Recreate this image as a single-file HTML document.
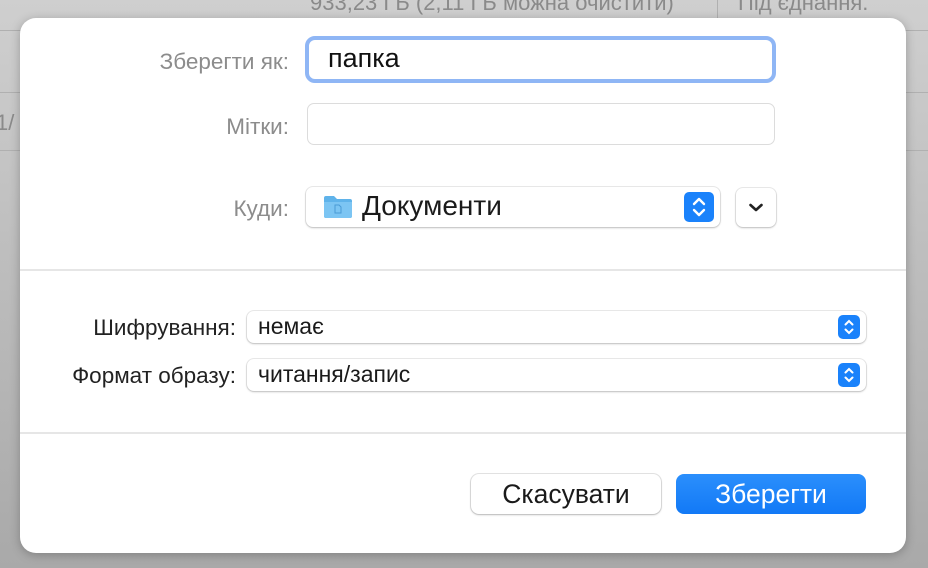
<!DOCTYPE html>
<html><head><meta charset="utf-8"><style>
*{margin:0;padding:0;box-sizing:border-box}
body{width:928px;height:568px;overflow:hidden;background:linear-gradient(#cfcfcf,#b8b8b8 60%,#a9a9a9);font-family:"Liberation Sans","DejaVu Sans",sans-serif;position:relative}
.bgtext{position:absolute;color:#8a8a8a;font-size:22px}
.hl{position:absolute;left:0;width:928px;height:1px;background:#b0b0b0}
.dlg{position:absolute;left:20px;top:18px;width:886px;height:535px;background:#fff;border-radius:16px;box-shadow:0 2px 10px rgba(0,0,0,.25)}
.lbl{position:absolute;font-size:22.5px;text-align:right;color:#8c8c8c;white-space:nowrap}
.lbl.dark{color:#222}
.field{position:absolute;background:#fff;border:1px solid #dcdcdc;border-radius:7px}
.pop{position:absolute;background:#fff;border-radius:7px;box-shadow:0 0 0 1px rgba(0,0,0,.08),0 1px 2px rgba(0,0,0,.2);font-size:23px;color:#1a1a1a}
.step{position:absolute;background:#1a82fb;border-radius:5px}
.sep{position:absolute;left:0;width:886px;height:2px;background:#e6e6e6}
.btn{position:absolute;height:40px;border-radius:8px;font-size:26.5px;text-align:center;line-height:40px}
</style></head><body>
<div class="bgtext" style="left:310px;top:-10px">933,23 ГБ (2,11 ГБ можна очистити)</div>
<div class="bgtext" style="left:738px;top:-10px">Під єднання.</div>
<div style="position:absolute;left:717px;top:0;width:1px;height:18px;background:#b0b0b0"></div>
<div class="hl" style="top:30px"></div>
<div class="hl" style="top:92px"></div>
<div class="hl" style="top:150px"></div>
<div class="bgtext" style="left:-4px;top:110px">1/</div>
<div class="dlg">
  <div class="lbl" style="left:60px;top:31px;width:209px">Зберегти як:</div>
  <div style="position:absolute;left:285px;top:18px;width:471px;height:47px;border:4px solid #8fb6f5;border-radius:10px;background:#fff"></div>
  <div style="position:absolute;left:308px;top:25px;font-size:27px;color:#111">папка</div>
  <div class="lbl" style="left:60px;top:96px;width:209px">Мітки:</div>
  <div class="field" style="left:287px;top:85px;width:468px;height:42px"></div>
  <div class="lbl" style="left:60px;top:178px;width:209px">Куди:</div>
  <div class="pop" style="left:286px;top:169px;width:414px;height:40px">
    <svg style="position:absolute;left:17px;top:8px" width="30" height="24" viewBox="0 0 30 24"><path d="M1 3a2 2 0 0 1 2-2h8l3 3h13a2 2 0 0 1 2 2v15a2 2 0 0 1-2 2H3a2 2 0 0 1-2-2z" fill="#5fb3ea"/><path d="M1 7h28v14a2 2 0 0 1-2 2H3a2 2 0 0 1-2-2z" fill="#7cc5f3"/><path d="M12 10h4l2 2v6h-6z" fill="none" stroke="#4a9bd6" stroke-width="1"/></svg>
    <div style="position:absolute;left:56px;top:3px;font-size:28px">Документи</div>
    <div class="step" style="left:378px;top:5px;width:30px;height:30px"><svg width="30" height="30" viewBox="0 0 30 30"><path d="M10 12l5-5 5 5M10 18l5 5 5-5" fill="none" stroke="#fff" stroke-width="2.4" stroke-linecap="round" stroke-linejoin="round"/></svg></div>
  </div>
  <div class="pop" style="left:716px;top:170px;width:40px;height:39px"><svg width="40" height="39" viewBox="0 0 40 39"><path d="M14.5 17l5.5 5 5.5-5" fill="none" stroke="#222" stroke-width="2.6" stroke-linecap="round" stroke-linejoin="round"/></svg></div>
  <div class="sep" style="top:251px"></div>
  <div class="lbl dark" style="left:0;top:297px;width:216px">Шифрування:</div>
  <div class="pop" style="left:227px;top:293px;width:619px;height:32px"><div style="position:absolute;left:11px;top:2px">немає</div><div class="step" style="left:591px;top:4px;width:22px;height:24px"><svg width="22" height="24" viewBox="0 0 22 24"><path d="M7.5 9.5l3.5-3.5 3.5 3.5M7.5 14.5l3.5 3.5 3.5-3.5" fill="none" stroke="#fff" stroke-width="2" stroke-linecap="round"/></svg></div></div>
  <div class="lbl dark" style="left:0;top:345px;width:216px">Формат образу:</div>
  <div class="pop" style="left:227px;top:341px;width:619px;height:32px"><div style="position:absolute;left:11px;top:2px">читання/запис</div><div class="step" style="left:591px;top:4px;width:22px;height:24px"><svg width="22" height="24" viewBox="0 0 22 24"><path d="M7.5 9.5l3.5-3.5 3.5 3.5M7.5 14.5l3.5 3.5 3.5-3.5" fill="none" stroke="#fff" stroke-width="2" stroke-linecap="round"/></svg></div></div>
  <div class="sep" style="top:414px"></div>
  <div class="btn" style="left:451px;top:456px;width:190px;background:#fff;color:#1a1a1a;box-shadow:0 0 0 1px rgba(0,0,0,.1),0 1px 2px rgba(0,0,0,.2)">Скасувати</div>
  <div class="btn" style="left:656px;top:456px;width:190px;background:linear-gradient(#2b8ffc,#1279f6);color:#fff">Зберегти</div>
</div>
</body></html>
